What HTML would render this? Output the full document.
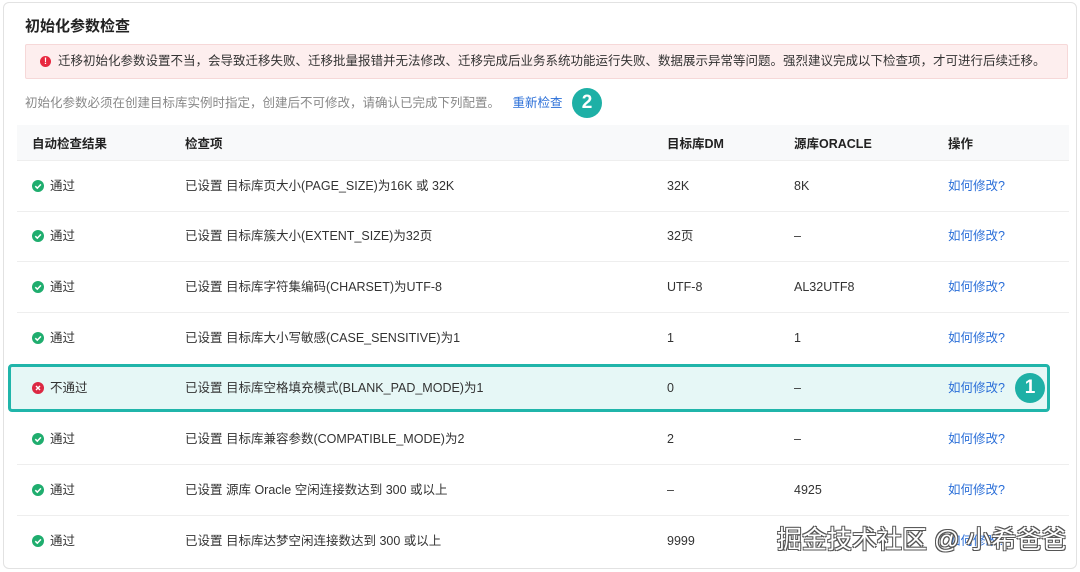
<!DOCTYPE html>
<html><head><meta charset="utf-8"><style>
*{margin:0;padding:0;box-sizing:border-box}
body{width:1080px;height:572px;background:#fff;font-family:"Liberation Sans","Noto Sans CJK SC",sans-serif;position:relative;overflow:hidden;color:#333}
.card{position:absolute;left:3px;top:2px;width:1074px;height:567px;border:1px solid #e2e2e2;border-radius:6px}
.title{position:absolute;left:25px;top:15px;font-size:15px;font-weight:bold;color:#222}
.alert{position:absolute;left:25px;top:44px;width:1043px;height:35px;background:#fdeeee;border:1px solid #f6d8d8;border-radius:2px;font-size:12.5px;line-height:33px;padding-left:32px;color:#333;white-space:nowrap}
.alert .dot{position:absolute;left:14px;top:11px;width:11px;height:11px;border-radius:50%;background:#e8283f;color:#fff;font-size:9px;line-height:11px;text-align:center;font-weight:bold}
.note{position:absolute;left:25px;top:95px;font-size:12.5px;color:#888;line-height:16px;white-space:nowrap}
.note a{color:#2b6fd8;margin-left:9px}
.b{position:absolute;width:30px;height:30px;border-radius:50%;background:#1eb0a6;color:#fff;font-weight:bold;font-size:19px;text-align:center;line-height:30px}
.hdr{position:absolute;left:17px;top:125px;width:1052px;height:36px;background:#f8f9fa;border-bottom:1px solid #eee}
.row{position:absolute;left:17px;width:1052px;height:51px;border-bottom:1px solid #eee}
.c{position:absolute;font-size:12.5px;color:#333;white-space:nowrap;line-height:16px;height:16px}
.hdr .c{font-weight:bold;top:11px;color:#222}
.row .c{top:17px}
.ic{position:absolute;left:15px;top:19px;width:12px;height:12px;border-radius:50%;background:#1fad6e}
.ic.x{background:#dc2843}
.ic svg{position:absolute;left:0;top:0}
.lk{color:#2b6fd8!important}
.hl{position:absolute;left:8px;top:364px;width:1042px;height:48px;border:3px solid #20b5aa;border-radius:4px;background:#e6f7f6}
.wm{position:absolute;left:777px;top:524px;font-size:25px;color:#fff;white-space:nowrap;line-height:32px;text-shadow:-1px -1px 0 #555,1px -1px 0 #555,-1px 1px 0 #555,1px 1px 0 #555}
</style></head><body>
<div class="card"></div>
<div class="title">初始化参数检查</div>
<div class="alert"><span class="dot">!</span>迁移初始化参数设置不当，会导致迁移失败、迁移批量报错并无法修改、迁移完成后业务系统功能运行失败、数据展示异常等问题。强烈建议完成以下检查项，才可进行后续迁移。</div>
<div class="note">初始化参数必须在创建目标库实例时指定，创建后不可修改，请确认已完成下列配置。 <a>重新检查</a></div>
<div class="b" style="left:572px;top:88px">2</div>
<div class="hdr"><span class="c" style="left:15px">自动检查结果</span><span class="c" style="left:168px">检查项</span><span class="c" style="left:650px">目标库DM</span><span class="c" style="left:777px">源库ORACLE</span><span class="c" style="left:931px">操作</span></div>
<div class="hl"></div>

<div class="row" style="top:161px"><span class="ic"><svg width="12" height="12"><path d="M3.3 6.2l2 2 3.6-3.8" stroke="#fff" stroke-width="1.5" fill="none"/></svg></span><span class="c" style="left:33px">通过</span><span class="c" style="left:168px">已设置 目标库页大小(PAGE_SIZE)为16K 或 32K</span><span class="c" style="left:650px">32K</span><span class="c" style="left:777px">8K</span><span class="c lk" style="left:931px">如何修改?</span></div>
<div class="row" style="top:211px"><span class="ic"><svg width="12" height="12"><path d="M3.3 6.2l2 2 3.6-3.8" stroke="#fff" stroke-width="1.5" fill="none"/></svg></span><span class="c" style="left:33px">通过</span><span class="c" style="left:168px">已设置 目标库簇大小(EXTENT_SIZE)为32页</span><span class="c" style="left:650px">32页</span><span class="c" style="left:777px">–</span><span class="c lk" style="left:931px">如何修改?</span></div>
<div class="row" style="top:262px"><span class="ic"><svg width="12" height="12"><path d="M3.3 6.2l2 2 3.6-3.8" stroke="#fff" stroke-width="1.5" fill="none"/></svg></span><span class="c" style="left:33px">通过</span><span class="c" style="left:168px">已设置 目标库字符集编码(CHARSET)为UTF-8</span><span class="c" style="left:650px">UTF-8</span><span class="c" style="left:777px">AL32UTF8</span><span class="c lk" style="left:931px">如何修改?</span></div>
<div class="row" style="top:313px;border:none"><span class="ic"><svg width="12" height="12"><path d="M3.3 6.2l2 2 3.6-3.8" stroke="#fff" stroke-width="1.5" fill="none"/></svg></span><span class="c" style="left:33px">通过</span><span class="c" style="left:168px">已设置 目标库大小写敏感(CASE_SENSITIVE)为1</span><span class="c" style="left:650px">1</span><span class="c" style="left:777px">1</span><span class="c lk" style="left:931px">如何修改?</span></div>
<div class="row" style="top:363px;border:none"><span class="ic x"><svg width="12" height="12"><path d="M4 4l4 4M8 4l-4 4" stroke="#fff" stroke-width="1.4"/></svg></span><span class="c" style="left:33px">不通过</span><span class="c" style="left:168px">已设置 目标库空格填充模式(BLANK_PAD_MODE)为1</span><span class="c" style="left:650px">0</span><span class="c" style="left:777px">–</span><span class="c lk" style="left:931px">如何修改?</span></div>
<div class="b" style="left:1015px;top:373px">1</div>
<div class="row" style="top:414px"><span class="ic"><svg width="12" height="12"><path d="M3.3 6.2l2 2 3.6-3.8" stroke="#fff" stroke-width="1.5" fill="none"/></svg></span><span class="c" style="left:33px">通过</span><span class="c" style="left:168px">已设置 目标库兼容参数(COMPATIBLE_MODE)为2</span><span class="c" style="left:650px">2</span><span class="c" style="left:777px">–</span><span class="c lk" style="left:931px">如何修改?</span></div>
<div class="row" style="top:465px"><span class="ic"><svg width="12" height="12"><path d="M3.3 6.2l2 2 3.6-3.8" stroke="#fff" stroke-width="1.5" fill="none"/></svg></span><span class="c" style="left:33px">通过</span><span class="c" style="left:168px">已设置 源库 Oracle 空闲连接数达到 300 或以上</span><span class="c" style="left:650px">–</span><span class="c" style="left:777px">4925</span><span class="c lk" style="left:931px">如何修改?</span></div>
<div class="row" style="top:516px;border:none"><span class="ic"><svg width="12" height="12"><path d="M3.3 6.2l2 2 3.6-3.8" stroke="#fff" stroke-width="1.5" fill="none"/></svg></span><span class="c" style="left:33px">通过</span><span class="c" style="left:168px">已设置 目标库达梦空闲连接数达到 300 或以上</span><span class="c" style="left:650px">9999</span><span class="c lk" style="left:931px">如何修改?</span></div>
<div class="wm">掘金技术社区 @ 小希爸爸</div>
</body></html>
